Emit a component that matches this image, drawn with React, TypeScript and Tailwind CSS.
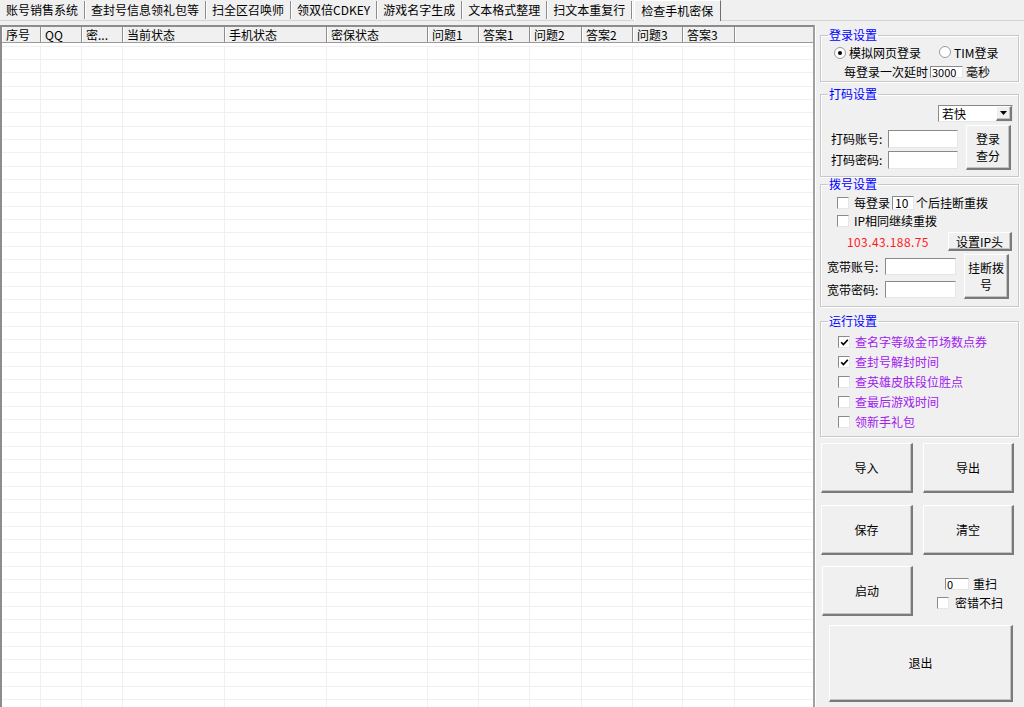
import React from "react";

const tabs = [
  "账号销售系统",
  "查封号信息领礼包等",
  "扫全区召唤师",
  "领双倍CDKEY",
  "游戏名字生成",
  "文本格式整理",
  "扫文本重复行",
];

const cols = [
  { t: "序号", w: "w-[39px]" },
  { t: "QQ", w: "w-[41px]" },
  { t: "密...", w: "w-[41px]" },
  { t: "当前状态", w: "w-[102px]" },
  { t: "手机状态", w: "w-[102px]" },
  { t: "密保状态", w: "w-[101px]" },
  { t: "问题1", w: "w-[51px]" },
  { t: "答案1", w: "w-[51px]" },
  { t: "问题2", w: "w-[52px]" },
  { t: "答案2", w: "w-[51px]" },
  { t: "问题3", w: "w-[50px]" },
  { t: "答案3", w: "w-[52px]" },
];

const runOptions = [
  { t: "查名字等级金币场数点券", on: true },
  { t: "查封号解封时间", on: true },
  { t: "查英雄皮肤段位胜点", on: false },
  { t: "查最后游戏时间", on: false },
  { t: "领新手礼包", on: false },
];

const sunken =
  "bg-white border border-t-[#8a8a8a] border-l-[#8a8a8a] border-r-[#e6e6e6] border-b-[#e6e6e6]";
const raised =
  "bg-[#f0f0f0] border-t border-l border-t-[#ffffff] border-l-[#ffffff] border-r-2 border-b-2 border-r-[#7a7a7a] border-b-[#7a7a7a] shadow-[inset_-1px_-1px_0_#c4c4c4]";

function Check({ on }: { on?: boolean }) {
  return (
    <span
      className={`inline-flex items-center justify-center w-[12px] h-[12px] shrink-0 ${sunken}`}
    >
      {on && (
        <svg width="9" height="9" viewBox="0 0 9 9">
          <path d="M1.2 4.2 L3.4 6.6 L7.8 1.8" stroke="#000" strokeWidth="1.7" fill="none" />
        </svg>
      )}
    </span>
  );
}

function Radio({ on }: { on?: boolean }) {
  return (
    <span className="inline-flex items-center justify-center w-[12px] h-[12px] shrink-0 rounded-full bg-white border border-[#9a9a9a]">
      {on && <span className="w-[4px] h-[4px] rounded-full bg-black" />}
    </span>
  );
}

function Group({
  title,
  className,
  children,
}: {
  title: string;
  className: string;
  children: React.ReactNode;
}) {
  return (
    <fieldset
      className={`border border-[#c8c8c8] shadow-[inset_1px_1px_0_#ffffff,1px_1px_0_#ffffff] ${className}`}
    >
      <legend className="ml-[7px] px-[1px] text-[#0000ff] leading-[12px]">{title}</legend>
      {children}
    </fieldset>
  );
}

export default function App() {
  return (
    <div className="w-[1024px] h-[707px] overflow-hidden bg-[#f0f0f0] text-[12px] leading-[14px] text-black font-['Noto_Sans_CJK_SC','Liberation_Sans',sans-serif] flex flex-col">
      {/* tab strip */}
      <div className="h-[21px] shrink-0 flex items-end border-b border-[#d4d4d4]">
        {tabs.map((t) => (
          <div
            key={t}
            className="h-[18px] mb-[1px] pl-[6px] pr-[6px] leading-[18px] border-r border-[#8c8c8c] shadow-[1px_0_0_#ffffff] whitespace-nowrap"
          >
            {t}
          </div>
        ))}
        <div className="relative -mb-[1px] ml-[2px] h-[21px] pl-[6px] pr-[7px] pt-[2px] leading-[16px] bg-[#f0f0f0] border-t border-l border-white border-r border-r-[#6e6e6e] whitespace-nowrap">
          检查手机密保
        </div>
      </div>

      <div className="flex flex-1 min-h-0 mt-[4px]">
        {/* table */}
        <div className="w-[815px] shrink-0 bg-white border-l-2 border-t-2 border-r-2 border-l-[#8c8c8c] border-t-[#8c8c8c] border-r-[#a0a0a0] overflow-hidden flex flex-col">
          <div className="h-[16px] shrink-0 flex bg-[#f0f0f0] border-b border-[#9a9a9a]">
            {cols.map((c) => (
              <div
                key={c.t}
                className={`${c.w} shrink-0 pl-[4px] leading-[15px] border-r border-[#8c8c8c] shadow-[inset_1px_0_0_#ffffff] whitespace-nowrap overflow-hidden`}
              >
                {c.t}
              </div>
            ))}
            <div className="flex-1 shadow-[inset_1px_0_0_#ffffff]" />
          </div>
          <div className="pt-[3px]">
            {Array.from({ length: 50 }).map((_, i) => (
              <div
                key={i}
                className={`flex border-t border-[#f0f0f0] ${i % 3 === 2 ? "h-[14px]" : "h-[13px]"}`}
              >
                {cols.map((c) => (
                  <div key={c.t} className={`${c.w} shrink-0 border-r border-[#f0f0f0]`} />
                ))}
              </div>
            ))}
          </div>
        </div>

        {/* right panel */}
        <div className="flex-1 flex flex-col pl-[4px] pr-[5px] pt-[4px] border-l border-white">
          <Group title="登录设置" className="h-[53px]">
            <div className="flex items-center h-[14px] mt-[5px] ml-[13px]">
              <Radio on />
              <span className="ml-[3px]">模拟网页登录</span>
              <span className="ml-[18px]">
                <Radio />
              </span>
              <span className="ml-[3px]">TIM登录</span>
            </div>
            <div className="flex items-center h-[14px] mt-[5px] ml-[23px]">
              <span>每登录一次延时</span>
              <span className={`ml-[2px] w-[33px] h-[12px] leading-[10px] text-[11px] pl-[1px] ${sunken}`}>3000</span>
              <span className="ml-[3px]">毫秒</span>
            </div>
          </Group>

          <Group title="打码设置" className="h-[89px] mt-[6px]">
            <div className="flex justify-end mt-[5px] mr-[5px]">
              <div className={`w-[75px] h-[17px] flex ${sunken}`}>
                <span className="flex-1 pl-[3px] leading-[15px]">若快</span>
                <span className={`w-[16px] h-[15px] flex items-center justify-center ${raised}`}>
                  <svg width="7" height="4" viewBox="0 0 7 4">
                    <path d="M0 0 H7 L3.5 4 Z" fill="#000" />
                  </svg>
                </span>
              </div>
            </div>
            <div className="flex mt-[3px] ml-[10px]">
              <div className="flex flex-col gap-[3px] pt-[5px]">
                <div className="flex items-center h-[18px]">
                  <span className="w-[57px]">打码账号:</span>
                  <span className={`w-[70px] h-[18px] ${sunken}`} />
                </div>
                <div className="flex items-center h-[18px]">
                  <span className="w-[57px]">打码密码:</span>
                  <span className={`w-[70px] h-[18px] ${sunken}`} />
                </div>
              </div>
              <button className={`ml-[8px] w-[45px] h-[45px] flex flex-col items-center justify-center gap-[4px] leading-[13px] ${raised}`}>
                <span>登录</span>
                <span>查分</span>
              </button>
            </div>
          </Group>

          <Group title="拨号设置" className="h-[129px] mt-[1px]">
            <div className="flex items-center h-[14px] mt-[6px] ml-[16px]">
              <Check />
              <span className="ml-[5px]">每登录</span>
              <span className={`ml-[2px] w-[22px] h-[14px] leading-[12px] pl-[2px] ${sunken}`}>10</span>
              <span className="ml-[2px]">个后挂断重拨</span>
            </div>
            <div className="flex items-center h-[14px] mt-[4px] ml-[16px]">
              <Check />
              <span className="ml-[5px]">IP相同继续重拨</span>
            </div>
            <div className="flex items-center h-[19px] mt-[4px] ml-[26px]">
              <span className="text-[#ff1a1a] tracking-[0.4px]">103.43.188.75</span>
              <button className={`ml-auto mr-[6px] w-[64px] h-[19px] leading-[15px] ${raised}`}>设置IP头</button>
            </div>
            <div className="flex mt-[3px] ml-[6px]">
              <div className="flex flex-col gap-[6px] pt-[4px]">
                <div className="flex items-center h-[17px]">
                  <span className="w-[58px]">宽带账号:</span>
                  <span className={`w-[71px] h-[17px] ${sunken}`} />
                </div>
                <div className="flex items-center h-[17px]">
                  <span className="w-[58px]">宽带密码:</span>
                  <span className={`w-[71px] h-[17px] ${sunken}`} />
                </div>
              </div>
              <button className={`ml-[8px] w-[45px] h-[45px] flex flex-col items-center justify-center gap-[4px] leading-[13px] ${raised}`}>
                <span>挂断拨</span>
                <span>号</span>
              </button>
            </div>
          </Group>

          <Group title="运行设置" className="h-[122px] mt-[8px]">
            <div className="mt-[5px] ml-[17px] flex flex-col">
              {runOptions.map((o) => (
                <div key={o.t} className="flex items-center h-[20px]">
                  <Check on={o.on} />
                  <span className="ml-[5px] text-[#a020f0]">{o.t}</span>
                </div>
              ))}
            </div>
          </Group>

          <div className="flex gap-[10px] mt-[6px] ml-[1px]">
            <button className={`w-[92px] h-[50px] ${raised}`}>导入</button>
            <button className={`w-[91px] h-[50px] ${raised}`}>导出</button>
          </div>
          <div className="flex gap-[10px] mt-[12px] ml-[1px]">
            <button className={`w-[92px] h-[50px] ${raised}`}>保存</button>
            <button className={`w-[91px] h-[50px] ${raised}`}>清空</button>
          </div>
          <div className="flex mt-[11px] ml-[2px]">
            <button className={`w-[91px] h-[50px] ${raised}`}>启动</button>
            <div className="ml-[24px] pt-[11px] flex flex-col">
              <div className="flex items-center h-[14px] ml-[8px]">
                <span className={`w-[24px] h-[12px] leading-[10px] text-[11px] pl-[1px] ${sunken}`}>0</span>
                <span className="ml-[4px]">重扫</span>
              </div>
              <div className="flex items-center h-[14px] mt-[5px]">
                <Check />
                <span className="ml-[6px]">密错不扫</span>
              </div>
            </div>
          </div>
          <button className={`mt-[9px] ml-[9px] w-[184px] h-[77px] ${raised}`}>退出</button>
        </div>
      </div>
    </div>
  );
}
